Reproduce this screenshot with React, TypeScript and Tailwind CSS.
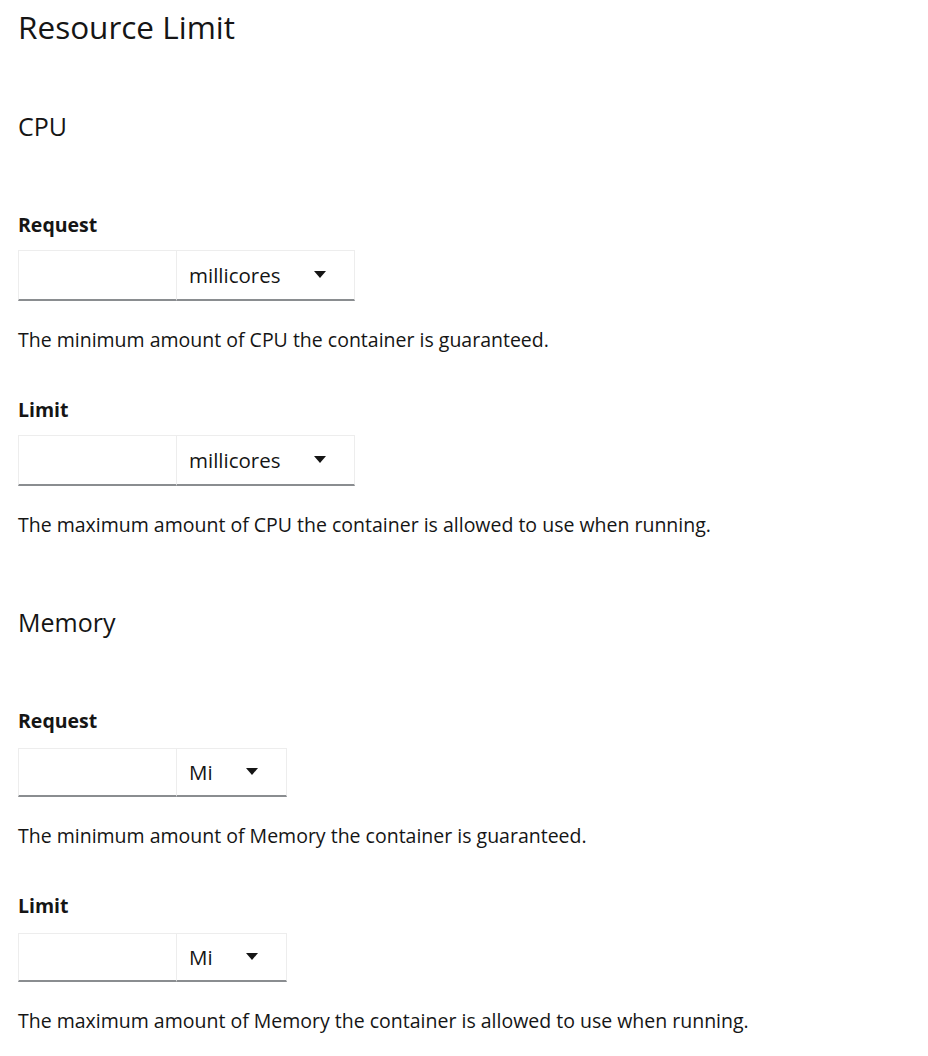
const font = { fontFamily: '"Open Sans", "Liberation Sans", sans-serif' }

function Caret() {
  return (
    <svg width="12" height="8" viewBox="0 0 12 8" className="shrink-0">
      <path d="M0 0h12L6 7z" fill="#151515" />
    </svg>
  )
}

type FieldProps = { label: string; unit: string; help: string; selectWidth: string; compact?: boolean }

function Field({ label, unit, help, selectWidth, compact }: FieldProps) {
  return (
    <div>
      <div className="text-[19.5px] font-bold leading-[24px] text-[#151515]">{label}</div>
      <div className={compact ? 'mt-[15px] flex h-[49px]' : 'mt-[13px] flex h-[51px]'}>
        <input
          className="w-[159px] border border-[#ededed] border-b-2 border-b-[#8a8d90] bg-white outline-none"
          aria-label={label}
        />
        <div
          className={`${selectWidth} flex items-center justify-between border border-l-0 border-[#ededed] border-b-2 border-b-[#8a8d90] pl-[12px] pr-[28px]`}
        >
          <span className="text-[20.5px] text-[#151515]">{unit}</span>
          <Caret />
        </div>
      </div>
      <p className="mt-[26px] text-[19.5px] leading-[26px] text-[#151515]">{help}</p>
    </div>
  )
}

export default function App() {
  return (
    <div className="min-h-screen bg-white px-[18px] text-[#151515]" style={font}>
      <h1 className="pt-[8px] text-[31.5px] font-medium leading-[38px]">Resource Limit</h1>

      <h2 className="mt-[64px] text-[25px] leading-[32px]">CPU</h2>
      <div className="mt-[71px] flex flex-col gap-[45px]">
        <Field
          label="Request"
          unit="millicores"
          help="The minimum amount of CPU the container is guaranteed."
          selectWidth="w-[178px]"
        />
        <Field
          label="Limit"
          unit="millicores"
          help="The maximum amount of CPU the container is allowed to use when running."
          selectWidth="w-[178px]"
        />
      </div>

      <h2 className="mt-[68px] text-[25px] leading-[32px]">Memory</h2>
      <div className="mt-[71px] flex flex-col gap-[45px]">
        <Field
          label="Request"
          unit="Mi"
          help="The minimum amount of Memory the container is guaranteed."
          selectWidth="w-[110px]"
          compact
        />
        <Field
          label="Limit"
          unit="Mi"
          help="The maximum amount of Memory the container is allowed to use when running."
          selectWidth="w-[110px]"
          compact
        />
      </div>
    </div>
  )
}
